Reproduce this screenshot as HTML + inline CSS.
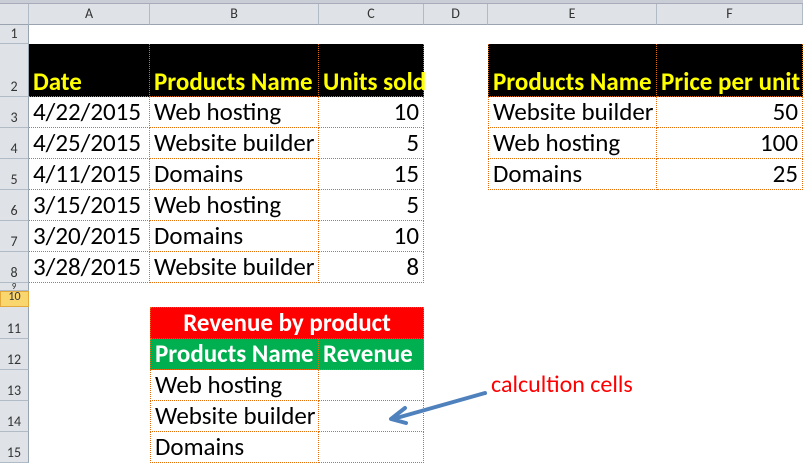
<!DOCTYPE html><html><head><style>
body{margin:0;width:803px;height:463px;overflow:hidden;background:#fff;font-family:Calibri,Carlito,"Liberation Sans",sans-serif;position:relative}
div{position:absolute;box-sizing:border-box}
.ch{top:4px;height:21px;background:#dfe3e8;border-right:1px solid #b1bbc6;border-bottom:1px solid #9aa4b0;font-size:14px;color:#333;text-align:center;line-height:20px}
.rh{left:0;width:29px;background:#dfe3e8;border-bottom:1px solid #b1bbc6;border-right:1px solid #9aa4b0;font-size:14px;color:#333;text-align:center;display:flex;align-items:flex-end;justify-content:center;padding-bottom:1px}
.c{border-right:1px dotted #e46c0a;border-bottom:1px dotted #e46c0a;font-size:25px;padding:0 4px;display:flex;align-items:flex-end;padding-bottom:0px;line-height:30px;white-space:nowrap;color:#000}
.h{background:#000;color:#ff0;font-weight:bold;line-height:28px}
.r{justify-content:flex-end}
.g{background:#00b050;color:#fff;font-weight:bold}
</style></head><body>
<div style="left:0;top:0;width:803px;height:4px;background:#c9ced6;border-bottom:1px solid #aab"></div>
<div class="ch" style="left:0;width:29px"></div>
<div class="ch" style="left:29px;width:121px">A</div>
<div class="ch" style="left:150px;width:169px">B</div>
<div class="ch" style="left:319px;width:105px">C</div>
<div class="ch" style="left:424px;width:64px">D</div>
<div class="ch" style="left:488px;width:169px">E</div>
<div class="ch" style="left:657px;width:146px">F</div>
<div class="rh" style="top:25px;height:19px">1</div>
<div class="rh" style="top:44px;height:53px">2</div>
<div class="rh" style="top:97px;height:31px">3</div>
<div class="rh" style="top:128px;height:31px">4</div>
<div class="rh" style="top:159px;height:31px">5</div>
<div class="rh" style="top:190px;height:31px">6</div>
<div class="rh" style="top:221px;height:31px">7</div>
<div class="rh" style="top:252px;height:31px">8</div>
<div class="rh" style="top:283px;height:8px;font-size:9px;line-height:6px;padding:0">9</div>
<div class="rh" style="top:291px;height:16px;background:#f9d66e;border:1px solid #e2a93c;font-size:12px;line-height:10px;padding:0;align-items:flex-start">10</div>
<div class="rh" style="top:307px;height:32px">11</div>
<div class="rh" style="top:339px;height:31px">12</div>
<div class="rh" style="top:370px;height:31px">13</div>
<div class="rh" style="top:401px;height:31px">14</div>
<div class="rh" style="top:432px;height:31px">15</div>

<div class="c h" style="left:29px;top:44px;width:121px;height:53px">Date</div>
<div class="c h" style="left:150px;top:44px;width:169px;height:53px">Products Name</div>
<div class="c h" style="left:319px;top:44px;width:105px;height:53px">Units sold</div>
<div class="c" style="left:29px;top:97px;width:121px;height:31px">4/22/2015</div>
<div class="c" style="left:150px;top:97px;width:169px;height:31px">Web hosting</div>
<div class="c r" style="left:319px;top:97px;width:105px;height:31px">10</div>
<div class="c" style="left:29px;top:128px;width:121px;height:31px">4/25/2015</div>
<div class="c" style="left:150px;top:128px;width:169px;height:31px">Website builder</div>
<div class="c r" style="left:319px;top:128px;width:105px;height:31px">5</div>
<div class="c" style="left:29px;top:159px;width:121px;height:31px">4/11/2015</div>
<div class="c" style="left:150px;top:159px;width:169px;height:31px">Domains</div>
<div class="c r" style="left:319px;top:159px;width:105px;height:31px">15</div>
<div class="c" style="left:29px;top:190px;width:121px;height:31px">3/15/2015</div>
<div class="c" style="left:150px;top:190px;width:169px;height:31px">Web hosting</div>
<div class="c r" style="left:319px;top:190px;width:105px;height:31px">5</div>
<div class="c" style="left:29px;top:221px;width:121px;height:31px">3/20/2015</div>
<div class="c" style="left:150px;top:221px;width:169px;height:31px">Domains</div>
<div class="c r" style="left:319px;top:221px;width:105px;height:31px">10</div>
<div class="c" style="left:29px;top:252px;width:121px;height:31px">3/28/2015</div>
<div class="c" style="left:150px;top:252px;width:169px;height:31px">Website builder</div>
<div class="c r" style="left:319px;top:252px;width:105px;height:31px">8</div>

<div class="c h" style="left:488px;top:44px;width:169px;height:53px;border-left:1px dotted #e46c0a">Products Name</div>
<div class="c h" style="left:657px;top:44px;width:146px;height:53px">Price per unit</div>
<div class="c" style="left:488px;top:97px;width:169px;height:31px;border-left:1px dotted #e46c0a">Website builder</div>
<div class="c r" style="left:657px;top:97px;width:146px;height:31px">50</div>
<div class="c" style="left:488px;top:128px;width:169px;height:31px;border-left:1px dotted #e46c0a">Web hosting</div>
<div class="c r" style="left:657px;top:128px;width:146px;height:31px">100</div>
<div class="c" style="left:488px;top:159px;width:169px;height:31px;border-left:1px dotted #e46c0a">Domains</div>
<div class="c r" style="left:657px;top:159px;width:146px;height:31px">25</div>

<div class="c" style="left:150px;top:307px;width:274px;height:32px;background:#f00;color:#fff;font-weight:bold;justify-content:center;border-left:1px dotted #e46c0a;border-top:1px dotted #e46c0a">Revenue by product</div>
<div class="c g" style="left:150px;top:339px;width:169px;height:31px;border-left:1px dotted #e46c0a">Products Name</div>
<div class="c g" style="left:319px;top:339px;width:105px;height:31px">Revenue</div>
<div class="c" style="left:150px;top:370px;width:169px;height:31px;border-left:1px dotted #e46c0a">Web hosting</div>
<div class="c" style="left:319px;top:370px;width:105px;height:31px"></div>
<div class="c" style="left:150px;top:401px;width:169px;height:31px;border-left:1px dotted #e46c0a">Website builder</div>
<div class="c" style="left:319px;top:401px;width:105px;height:31px"></div>
<div class="c" style="left:150px;top:432px;width:169px;height:31px;border-left:1px dotted #e46c0a">Domains</div>
<div class="c" style="left:319px;top:432px;width:105px;height:31px"></div>

<div style="left:491px;top:370px;font-size:24px;color:#f00;white-space:nowrap">calcultion cells</div>
<svg style="position:absolute;left:0;top:0" width="803" height="463"><g stroke="#4f81bd" stroke-width="4" fill="none" stroke-linecap="round" stroke-linejoin="round"><path d="M485 393 L393 419"/><path d="M405 408 L391 419 L406 423"/></g></svg>
</body></html>
